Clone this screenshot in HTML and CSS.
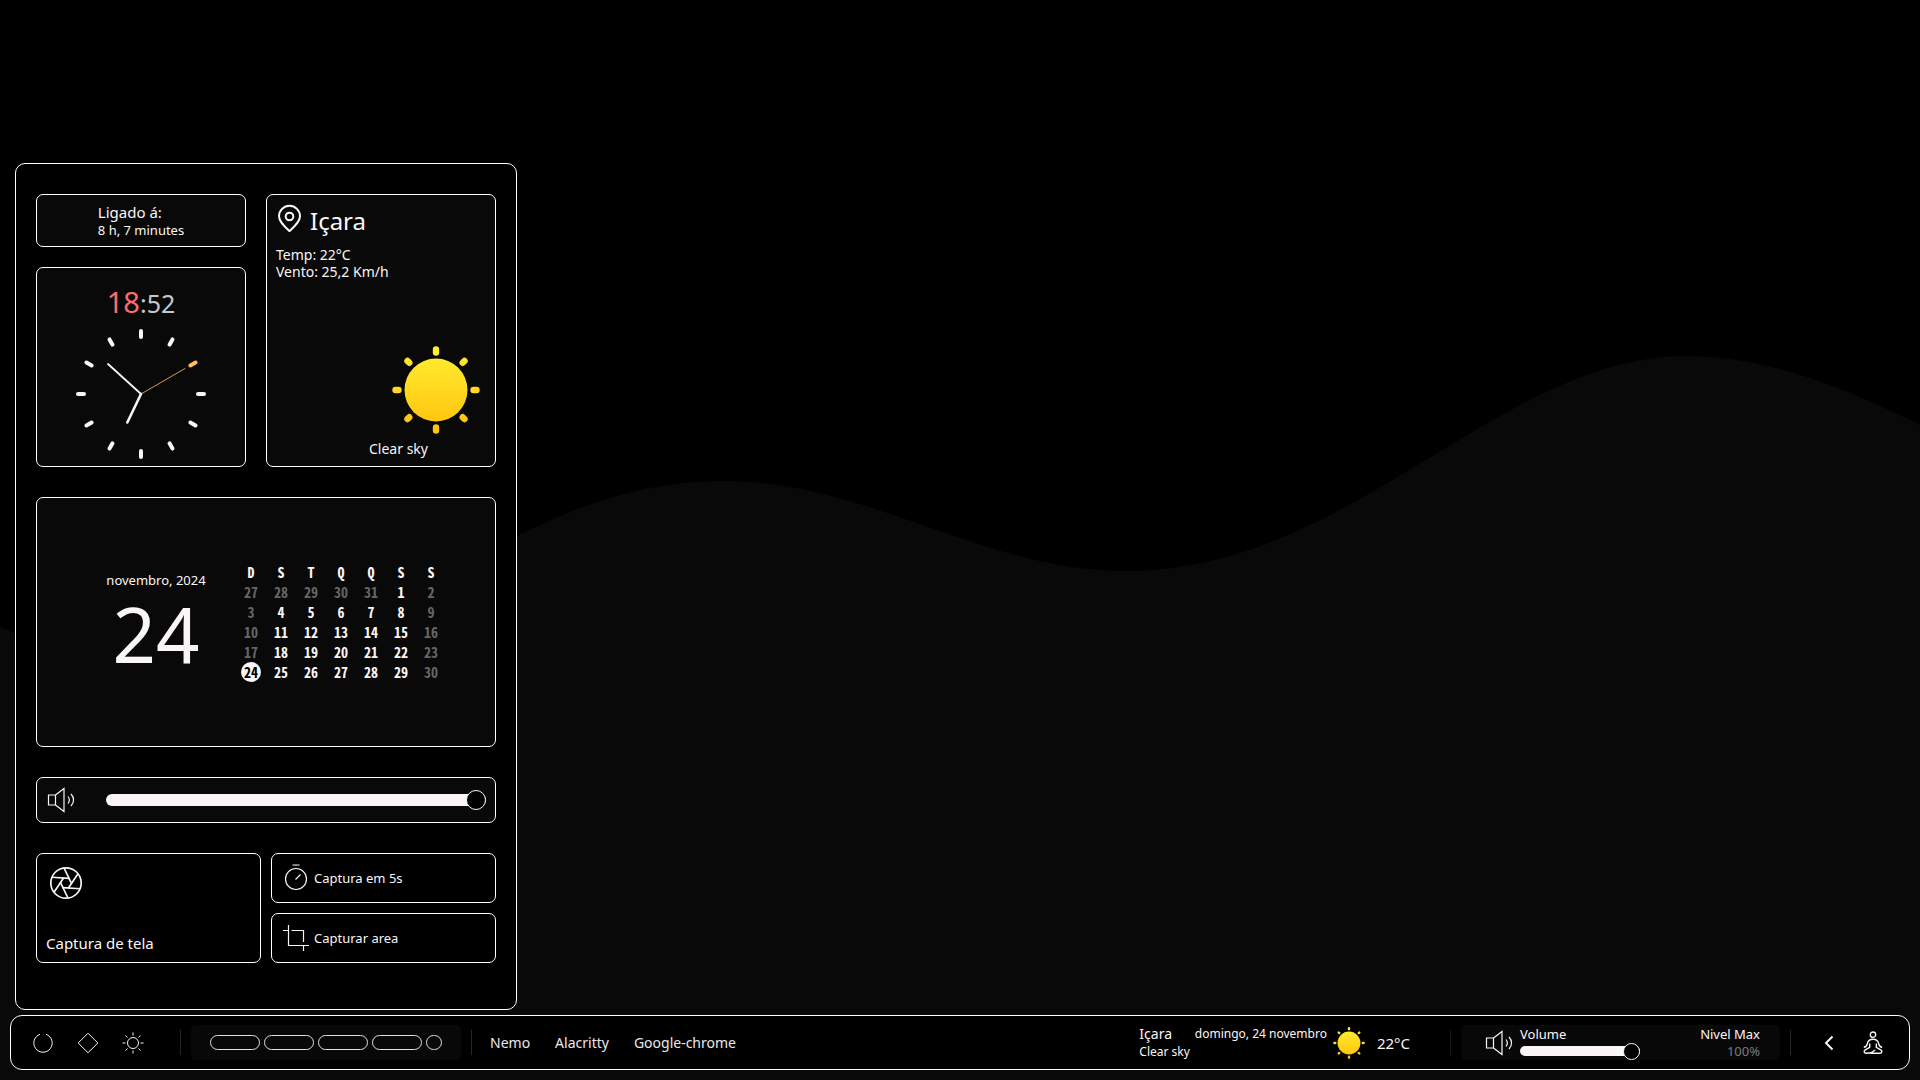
FILE: index.html
```html
<!DOCTYPE html>
<html lang="pt-BR">
<head>
<meta charset="utf-8">
<title>Desktop</title>
<link rel="stylesheet" href="styles.css">
</head>
<body>
<svg class="wallpaper" viewBox="0 0 1920 1080" preserveAspectRatio="none" aria-hidden="true">
  <path d="M0 627C60 650 110 690 200 690C330 690 400 590 517 536C590 500 650 481 725 481C870 481 980 571 1127 571C1350 571 1500 356 1686 356C1770 356 1850 390 1920 425V1080H0Z" fill="#090909"/>
</svg>

<svg class="defs" aria-hidden="true">
  <defs>
    <linearGradient id="sun-fill" x1="0" y1="0" x2="0" y2="88" gradientUnits="userSpaceOnUse">
      <stop offset="0" stop-color="#fff133"/>
      <stop offset="1" stop-color="#ffbf0a"/>
    </linearGradient>
    <symbol id="sun" viewBox="0 0 88 88">
      <circle cx="44" cy="44" r="31.5" fill="url(#sun-fill)"/>
      <g fill="none" stroke-width="6.4" stroke-linecap="round">
        <path stroke="#ffee2e" d="M44 3.5v3"/>
        <path stroke="#ffe42a" d="M15.5 15l1.800 1.800M72.500 15l-1.800 1.800"/>
        <path stroke="#ffd81f" d="M3.500 44h3M81.500 44h3"/>
        <path stroke="#ffc814" d="M15.500 73l1.800-1.800M72.500 73l-1.800-1.800"/>
        <path stroke="#ffc40f" d="M44 84.500v-3"/>
      </g>
    </symbol>
    <symbol id="speaker" viewBox="0 0 28 26">
      <g fill="none" stroke="#faf5f7" stroke-width="1.200">
        <path d="M1.500 8h7v10h-7zM8.500 8L17 1.500v23L8.500 18"/>
        <path d="M21 9.500c1.700 2.200 1.700 4.800 0 7M24 7c3.400 3.600 3.400 8.400 0 12"/>
      </g>
    </symbol>
  </defs>
</svg>

<main class="panel">
  <section class="overview">
    <div class="column">
      <div class="card uptime">
        <div>
          <p class="uptime-label">Ligado á:</p>
          <p class="small">8 h, 7 minutes</p>
        </div>
      </div>
      <div class="card clock">
        <p class="time"><span class="hour">18</span>:52</p>
        <svg class="face" viewBox="-66 -66 132 132" aria-hidden="true">
          <g stroke="#faf5f7" stroke-width="4" stroke-linecap="round">
            <path d="M0-63v6M0 57v6M-63 0h6M57 0h6"/>
            <path d="M0-63v6M0 57v6M-63 0h6M57 0h6" transform="rotate(30)"/>
            <path d="M0 57v6M-63 0h6M57 0h6" transform="rotate(60)"/>
            <path stroke="#ffbd5e" d="M0-63v6" transform="rotate(60)"/>
          </g>
          <g fill="none" stroke="#faf5f7" stroke-linecap="round">
            <path stroke="#d59b49" d="M0 0l44-25.500"/>
            <path stroke-width="1.800" d="M0 0l-33-30"/>
            <path stroke-width="2.600" d="M0 0l-13.700 28.500"/>
          </g>
        </svg>
      </div>
    </div>
    <div class="card weather">
      <h1 class="city">
        <svg class="pin" viewBox="0 0 28 28" aria-hidden="true"><g fill="none" stroke="#faf5f7" stroke-width="2"><path d="M13.500 27.200C8 22 3 17.500 3 12.300a10.500 10.500 0 0 1 21 0c0 5.200-5 9.700-10.500 14.900z"/><circle cx="13.500" cy="12.500" r="3.800"/></g></svg>
        Içara
      </h1>
      <p class="medium">Temp: 22°C</p>
      <p class="medium">Vento: 25,2 Km/h</p>
      <svg class="sun-large" aria-hidden="true"><use href="#sun"/></svg>
      <p class="medium condition">Clear sky</p>
    </div>
  </section>

  <section class="card calendar">
    <div class="today">
      <p class="small">novembro, 2024</p>
      <p class="day">24</p>
    </div>
    <table class="month">
      <thead><tr><th>D</th><th>S</th><th>T</th><th>Q</th><th>Q</th><th>S</th><th>S</th></tr></thead>
      <tbody>
        <tr><td class="dim">27</td><td class="dim">28</td><td class="dim">29</td><td class="dim">30</td><td class="dim">31</td><td>1</td><td class="dim">2</td></tr>
        <tr><td class="dim">3</td><td>4</td><td>5</td><td>6</td><td>7</td><td>8</td><td class="dim">9</td></tr>
        <tr><td class="dim">10</td><td>11</td><td>12</td><td>13</td><td>14</td><td>15</td><td class="dim">16</td></tr>
        <tr><td class="dim">17</td><td>18</td><td>19</td><td>20</td><td>21</td><td>22</td><td class="dim">23</td></tr>
        <tr><td><span class="current">24</span></td><td>25</td><td>26</td><td>27</td><td>28</td><td>29</td><td class="dim">30</td></tr>
      </tbody>
    </table>
  </section>

  <section class="card sound">
    <svg class="speaker" aria-hidden="true"><use href="#speaker"/></svg>
    <input class="slider slider-large" type="range" min="0" max="100" value="100" aria-label="Volume">
  </section>

  <section class="capture">
    <button class="card shot" type="button">
      <svg class="aperture" viewBox="-17 -17 34 34" aria-hidden="true">
        <g fill="none" stroke="#faf5f7" stroke-width="1.700">
          <circle r="15.200"/>
          <path d="M-2-15L5.600 .6"/>
          <path d="M-2-15L5.600 .6" transform="rotate(60)"/>
          <path d="M-2-15L5.600 .6" transform="rotate(120)"/>
          <path d="M-2-15L5.600 .6" transform="rotate(180)"/>
          <path d="M-2-15L5.600 .6" transform="rotate(240)"/>
          <path d="M-2-15L5.600 .6" transform="rotate(300)"/>
        </g>
      </svg>
      <span>Captura de tela</span>
    </button>
    <button class="card option" type="button">
      <svg class="option-icon" viewBox="0 0 28 28" aria-hidden="true"><g fill="none" stroke="#faf5f7" stroke-width="1.200"><circle cx="14" cy="15" r="10.500"/><path d="M10.500 1h7M13.500 15.500l5-5"/></g></svg>
      Captura em 5s
    </button>
    <button class="card option" type="button">
      <svg class="option-icon" viewBox="0 0 28 28" aria-hidden="true"><path fill="none" stroke="#faf5f7" stroke-width="1.200" d="M1 6.500h5M6.500 1v20.500H27M9.500 6.500h12V18M21.500 21.500V27"/></svg>
      Capturar area
    </button>
  </section>
</main>

<footer class="bar">
  <nav class="launchers" aria-label="Sistema">
    <button class="icon" type="button" aria-label="Desligar"><svg viewBox="0 0 24 24"><path d="M9 3.300a9.200 9.200 0 1 0 6 0"/></svg></button>
    <button class="icon" type="button" aria-label="Menu"><svg viewBox="0 0 24 24"><path d="M12 2.200L21.800 12 12 21.800 2.200 12z"/></svg></button>
    <button class="icon" type="button" aria-label="Brilho"><svg viewBox="0 0 24 24"><circle cx="12" cy="12" r="5.500"/><path d="M12 1.500v3M12 19.500v3M1.500 12h3M19.500 12h3M4.500 4.500l2 2M17.500 17.500l2 2M4.500 19.500l2-2M17.500 6.500l2-2"/></svg></button>
  </nav>
  <span class="divider"></span>
  <div class="tray workspaces">
    <button class="pill" type="button" aria-label="1"></button>
    <button class="pill" type="button" aria-label="2"></button>
    <button class="pill" type="button" aria-label="3"></button>
    <button class="pill" type="button" aria-label="4"></button>
    <button class="pill dot" type="button" aria-label="5"></button>
  </div>
  <span class="divider"></span>
  <nav class="apps" aria-label="Aplicativos">
    <a href="#">Nemo</a>
    <a href="#">Alacritty</a>
    <a href="#">Google-chrome</a>
  </nav>

  <div class="forecast">
    <div class="place">
      <p class="medium">Içara</p>
      <p class="condition-small">Clear sky</p>
    </div>
    <p class="date">domingo, 24 novembro</p>
    <svg class="sun-small" aria-hidden="true"><use href="#sun"/></svg>
    <p class="degrees">22°C</p>
  </div>
  <span class="divider faint"></span>
  <div class="tray volume">
    <svg class="speaker" aria-hidden="true"><use href="#speaker"/></svg>
    <div class="level">
      <label for="bar-volume">Volume</label>
      <input class="slider slider-small" id="bar-volume" type="range" min="0" max="100" value="100">
    </div>
    <div class="status">
      <p class="small">Nivel Max</p>
      <p class="small muted">100%</p>
    </div>
  </div>
  <span class="divider"></span>
  <div class="session">
    <button class="icon" type="button" aria-label="Voltar"><svg viewBox="0 0 24 24"><path class="bold" d="M15.500 5.500L9 12l6.500 6.500"/></svg></button>
    <button class="icon" type="button" aria-label="Descansar"><svg viewBox="0 0 24 24"><g class="figure"><circle cx="12" cy="3.700" r="2.700"/><path d="M2.800 16.200C5 16 5.700 15 6.200 13C6.900 9.800 8 8.300 12 8.300S17.100 9.800 17.800 13C18.300 15 19 16 21.200 16.200M8.700 12.500v3.800L4.300 18.800C2.300 20 3 22.300 5.300 22.200L10 21.800L14.300 19M15.300 12.500v3.800L19.700 18.800C21.700 20 21 22.300 18.700 22.200H10"/></g></svg></button>
  </div>
</footer>
</body>
</html>
```
FILE: styles.css
```css
* { box-sizing: border-box; }

body {
  margin: 0;
  min-height: 100vh;
  padding: 10px;
  display: flex;
  flex-direction: column;
  justify-content: flex-end;
  gap: 5px;
  background: #000;
  color: #faf5f7;
  font-family: "Noto Sans", sans-serif;
  font-size: 14px;
  line-height: 17px;
}

p, h1 { margin: 0; font-weight: 400; }
svg { display: block; flex: none; }
button { color: inherit; font: inherit; cursor: pointer; }

.defs { position: absolute; width: 0; height: 0; }

.wallpaper {
  position: absolute;
  inset: 0;
  width: 100%;
  height: 100%;
  z-index: -1;
}

.small { font-size: 13px; }
.medium { font-size: 14px; }
.muted { color: #7d7b7c; }

/* Side panel */
.panel {
  width: 502px;
  max-width: 100%;
  margin-left: 5px;
  padding: 30px 20px 46px;
  display: flex;
  flex-direction: column;
  gap: 30px;
  border: 1px solid #fff;
  border-radius: 10px;
  background: #000;
}

.card {
  border: 1px solid #fff;
  border-radius: 7px;
  background: #090909;
}

.overview {
  display: grid;
  grid-template-columns: 21fr 23fr;
  gap: 20px;
}

.column { display: flex; flex-direction: column; gap: 20px; }

.uptime {
  padding: 7px 0;
  display: flex;
  justify-content: center;
}
.uptime-label { font-size: 15px; line-height: 20px; }

.clock {
  padding: 17px 0 6px;
  display: flex;
  flex-direction: column;
  align-items: center;
  gap: 7px;
}
.time { font-size: 25px; line-height: 36px; color: #c8c8c8; }
.hour { font-size: 29px; line-height: 1; color: #ff6b70; }
.face { width: 132px; height: 132px; }

.weather {
  padding: 9px;
  display: flex;
  flex-direction: column;
}
.city {
  margin-bottom: 8px;
  display: flex;
  gap: 6px;
  font-size: 24px;
  line-height: 34px;
}
.pin { width: 28px; height: 28px; }
.sun-large {
  width: 88px;
  height: 88px;
  margin: auto 6px 6px auto;
}
.condition { margin-left: 93px; }

.calendar {
  height: 250px;
  padding-left: 69px;
  display: flex;
  align-items: center;
  gap: 30px;
}
.today { width: 100px; padding-top: 6px; text-align: center; white-space: nowrap; }
.day { font-size: 76px; line-height: 90px; }

.month {
  border-collapse: collapse;
  font-family: "Noto Sans Mono CJK SC", Roboto, sans-serif;
  font-size: 14px;
  line-height: 20px;
  text-align: center;
}
.month th, .month td { width: 30px; height: 20px; padding: 0; font-weight: 700; }
.month .dim { color: #666; }
.month .current {
  display: block;
  width: 20px;
  margin: 0 auto;
  border-radius: 50%;
  background: #faf5f7;
  color: #000;
}

.sound {
  height: 46px;
  padding: 0 9px 0 10px;
  display: flex;
  align-items: center;
  gap: 31px;
}
.speaker { width: 28px; height: 26px; }

/* Sliders */
.slider {
  appearance: none;
  margin: 0;
  background: transparent;
}
.slider::-webkit-slider-runnable-track {
  border-radius: 6px;
  background: #faf5f7;
}
.slider::-webkit-slider-thumb {
  appearance: none;
  border: 1px solid #faf5f7;
  border-radius: 50%;
  background: #000;
}
.slider-large { flex: 1; height: 22px; }
.slider-large::-webkit-slider-runnable-track { height: 12px; }
.slider-large::-webkit-slider-thumb { width: 20px; height: 20px; margin-top: -4px; }
.slider-small { display: block; width: 120px; height: 18px; }
.slider-small::-webkit-slider-runnable-track { height: 10px; }
.slider-small::-webkit-slider-thumb { width: 17px; height: 17px; margin-top: -3px; }

/* Screen capture */
.capture {
  display: grid;
  grid-template-columns: 1fr 1fr;
  grid-template-rows: 50px 50px;
  gap: 10px;
}
.capture .card { background: #000; text-align: left; }
.shot {
  grid-row: span 2;
  padding: 12px 9px 9px;
  display: flex;
  flex-direction: column;
  justify-content: space-between;
  font-size: 15px;
  line-height: 20px;
}
.aperture { width: 34px; height: 34px; margin-left: 3px; }
.option {
  padding: 0 10px;
  display: flex;
  align-items: center;
  gap: 4px;
  font-size: 13px;
}
.option-icon { width: 28px; height: 28px; }

/* Bottom bar */
.bar {
  height: 55px;
  padding: 0 24px 0 20px;
  display: flex;
  align-items: center;
  border: 1px solid #fff;
  border-radius: 12px;
  background: #000;
  white-space: nowrap;
}
.launchers { display: flex; gap: 21px; margin-right: 25px; }
.icon {
  width: 24px;
  height: 24px;
  padding: 0;
  border: 0;
  background: none;
}
.icon svg { width: 24px; height: 24px; fill: none; stroke: #faf5f7; stroke-width: 1; }
.icon .bold { stroke-width: 2; }
.icon .figure { stroke-width: 1.4; }

.divider { width: 1px; height: 25px; margin: 0 10px; background: #26262a; }
.faint { background: #161616; }

.tray {
  height: 35px;
  border-radius: 5px;
  background: #080808;
}
.workspaces {
  width: 270px;
  padding-left: 19px;
  display: flex;
  align-items: center;
  gap: 4px;
}
.pill {
  width: 50px;
  height: 15px;
  padding: 0;
  border: 1px solid #e4e0e2;
  border-radius: 8px;
  background: none;
}
.dot { width: 16px; }

.apps { display: flex; gap: 25px; margin-left: 8px; }
.apps a { color: #ebe7e9; text-decoration: none; }

.forecast {
  margin-left: auto;
  margin-right: 30px;
  display: flex;
  align-items: center;
}
.condition-small { font-size: 12px; line-height: 19px; }
.date { align-self: flex-start; margin: 0 6px 0 5px; font-size: 12px; }
.sun-small { width: 32px; height: 32px; margin-right: 12px; }
.degrees { font-size: 15px; line-height: 20px; }

.volume {
  width: 319px;
  padding: 0 20px 0 24px;
  display: flex;
  align-items: center;
}
.level { margin-left: 7px; font-size: 13px; }
.level label { display: block; line-height: 16px; }
.status { margin-left: auto; text-align: right; }

.session { display: flex; gap: 20px; margin-left: 16px; }
```
